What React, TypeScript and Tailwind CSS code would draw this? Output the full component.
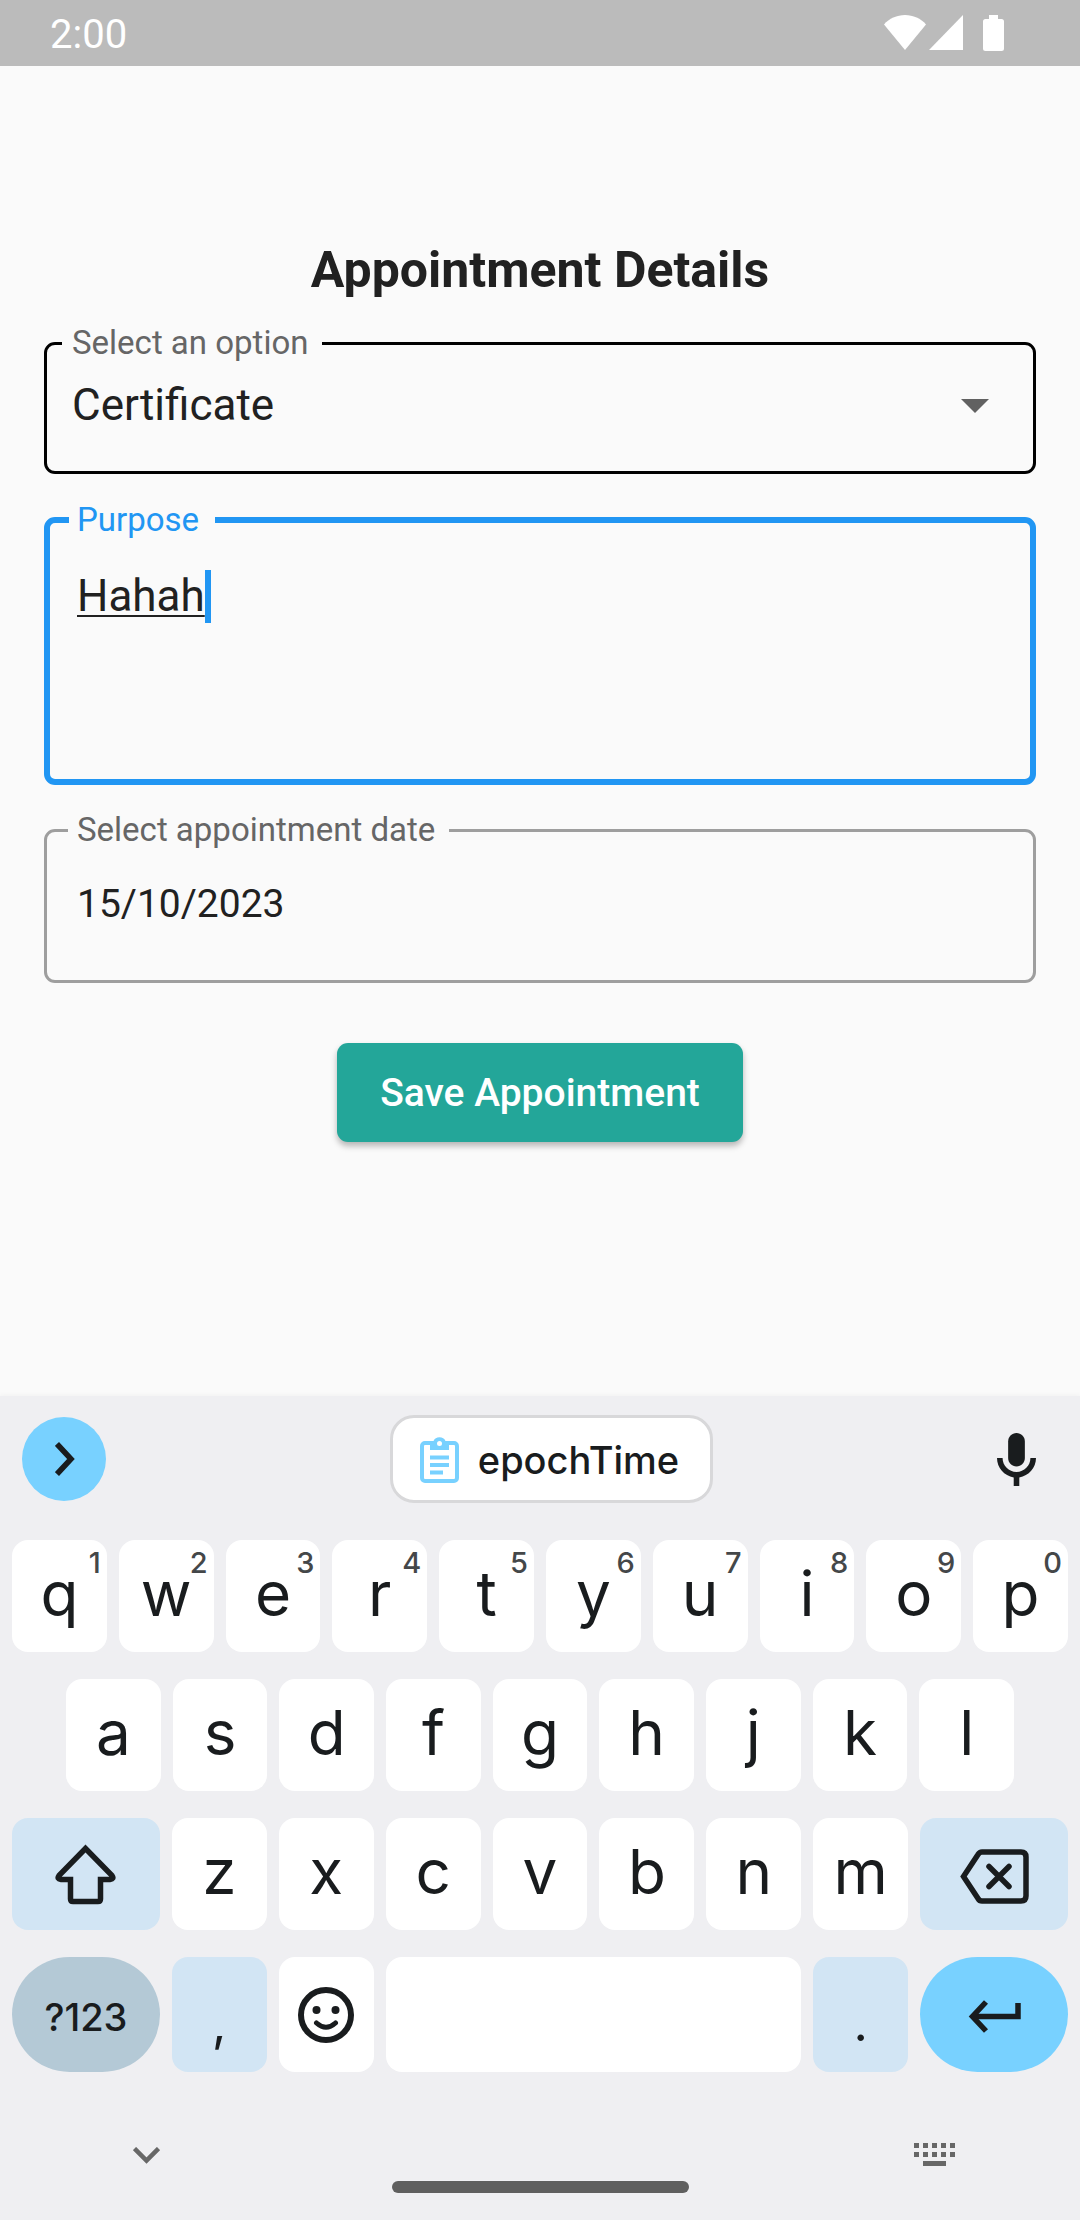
import type { ReactNode } from "react";

function StatusBar() {
  return (
    <header className="flex h-[66px] items-center justify-between bg-[#bbbbbb] pl-[50px] pr-[76px] text-white">
      <span className="pt-1 text-[40px] leading-[48px]">2:00</span>
      <div className="flex items-center">
        <svg className="h-[36px] w-[42px]" viewBox="0 0 42 36" fill="currentColor" aria-label="Wi-Fi">
          <path d="M21 35L0 9.500C5 3.500 13 0 21 0s16 3.500 21 9.500z" />
        </svg>
        <svg className="ml-[3px] h-[36px] w-[34px]" viewBox="0 0 34 36" fill="currentColor" aria-label="Signal">
          <path d="M34 0V35H0z" />
        </svg>
        <svg className="ml-5 h-[36px] w-[21px]" viewBox="0 0 21 36" fill="currentColor" aria-label="Battery">
          <path d="M6 0h9v4h3.500Q21 4 21 6.500V33.500Q21 36 18.500 36H2.500Q0 36 0 33.500V6.500Q0 4 2.500 4H6z" />
        </svg>
      </div>
    </header>
  );
}

const legendBase = "text-[33px] leading-[38px]";

function AppointmentForm() {
  return (
    <main className="flex flex-1 flex-col items-stretch px-11 pt-[174px] text-[#212121]">
      <h1 className="text-center text-[50px] font-bold leading-[60px]">Appointment Details</h1>

      <fieldset className="relative mt-6 rounded-[11px] border-3 border-black">
        <legend className="ml-[15px] pl-[10px] pr-[14px] text-[#666666]">
          <label htmlFor="option" className={`${legendBase} block`}>
            Select an option
          </label>
        </legend>
        <select
          id="option"
          defaultValue="Certificate"
          className="block h-[109px] w-full appearance-none bg-transparent pb-[23px] pl-[25px] text-[44px] leading-[52px] outline-none"
        >
          <option>Certificate</option>
        </select>
        <svg className="pointer-events-none absolute right-11 top-[37px] h-[14px] w-[28px]" viewBox="0 0 28 14" fill="#616161" aria-hidden="true">
          <path d="M0 0h28L14 14z" />
        </svg>
      </fieldset>

      <fieldset className="relative mt-[27px] rounded-[11px] border-6 border-[#2196f3]">
        <legend className="ml-[19px] pl-2 pr-4 text-[#2196f3]">
          <label htmlFor="purpose" className={`${legendBase} block`}>
            Purpose
          </label>
        </legend>
        <textarea
          id="purpose"
          defaultValue="Hahah"
          spellCheck={false}
          className="block h-[240px] w-full resize-none bg-transparent pl-[27px] pt-[31px] text-[44px] leading-[52px] underline decoration-2 underline-offset-4 outline-none"
        />
        <span className="absolute left-[155px] top-[31px] h-[53px] w-1.5 bg-[#2196f3]" aria-hidden="true" />
      </fieldset>

      <fieldset className="mt-[26px] rounded-[11px] border-3 border-[#9e9e9e]">
        <legend className="ml-[21px] pl-[9px] pr-[14px] text-[#666666]">
          <label htmlFor="date" className={`${legendBase} block`}>
            Select appointment date
          </label>
        </legend>
        <input
          id="date"
          type="text"
          defaultValue="15/10/2023"
          className="block h-[131px] w-full bg-transparent pb-[21px] pl-[30px] text-[39px] leading-[48px] outline-none"
        />
      </fieldset>

      <button
        type="button"
        className="mt-[60px] h-[99px] self-center rounded-[11px] bg-[#23a699] px-[43px] text-[39px] font-medium leading-[48px] text-white shadow-[0_4px_6px_rgba(0,0,0,0.28)]"
      >
        Save Appointment
      </button>
    </main>
  );
}

type KeyProps = {
  label: string;
  hint?: string;
  className?: string;
  children?: ReactNode;
};

function Key({ label, hint, className, children }: KeyProps) {
  return (
    <button
      type="button"
      aria-label={label}
      className={`relative flex h-full min-w-0 items-center justify-center ${
        className ?? "flex-[95_1_0px] rounded-2xl bg-white pb-1 text-[62px] leading-[76px]"
      }`}
    >
      {children ?? label}
      {hint && (
        <span className="absolute right-1.5 top-2 text-[29px] font-medium leading-[29px] text-[#444749]">{hint}</span>
      )}
    </button>
  );
}

const topRow = [
  ["q", "1"],
  ["w", "2"],
  ["e", "3"],
  ["r", "4"],
  ["t", "5"],
  ["y", "6"],
  ["u", "7"],
  ["i", "8"],
  ["o", "9"],
  ["p", "0"],
];
const homeRow = ["a", "s", "d", "f", "g", "h", "j", "k", "l"];
const bottomRow = ["z", "x", "c", "v", "b", "n", "m"];

function SuggestionBar() {
  return (
    <div className="flex h-[88px] items-center justify-between pl-[22px] pr-11">
      <button type="button" aria-label="Expand toolbar" className="flex size-[84px] items-center justify-center rounded-full bg-[#78d1ff]">
        <svg className="ml-0.5 h-[34px] w-[20px]" viewBox="0 0 20 34" fill="none" stroke="currentColor" strokeWidth="5.500" aria-hidden="true">
          <path d="M2 2L16 17L2 32" />
        </svg>
      </button>
      <button type="button" className="flex h-full items-center rounded-[24px] border-3 border-[#d8d8da] bg-white pl-[27px] pr-[31px] text-[38px] font-medium leading-[48px]">
        <svg className="mr-[19px] h-[47px] w-[39px]" viewBox="0 0 39 47" fill="none" aria-hidden="true">
          <rect x="2" y="7" width="35" height="38" rx="3" stroke="#78d1ff" strokeWidth="4" />
          <path d="M10 5h3.500a6.500 6 0 0 1 12 0H29v9H10z" fill="#78d1ff" />
          <circle cx="19.500" cy="7.500" r="2.500" fill="#fff" />
          <path d="M10 21.500h19M10 29h19M10 36.500h13" stroke="#78d1ff" strokeWidth="4" />
        </svg>
        <span className="pt-0.5">epochTime</span>
      </button>
      <button type="button" aria-label="Voice input">
        <svg className="h-[53px] w-[39px]" viewBox="5 2 14 19" fill="currentColor" aria-hidden="true">
          <path d="M12 14c1.660 0 3-1.340 3-3V5c0-1.660-1.340-3-3-3S9 3.340 9 5v6c0 1.660 1.340 3 3 3z" />
          <path d="M17 11c0 2.760-2.240 5-5 5s-5-2.240-5-5H5c0 3.530 2.610 6.430 6 6.920V21h2v-3.080c3.390-.49 6-3.390 6-6.920h-2z" />
        </svg>
      </button>
    </div>
  );
}

function Keyboard() {
  return (
    <section
      aria-label="Keyboard"
      className="bg-[#efeff2] pb-[27px] pt-[19px] font-[Inter,sans-serif] text-[#191c1e] shadow-[0_-1px_5px_rgba(0,0,0,0.04)]"
    >
      <SuggestionBar />

      <div className="mt-[37px] flex flex-col gap-[27px] px-3">
        <div className="flex h-28 gap-3">
          {topRow.map(([letter, digit]) => (
            <Key key={letter} label={letter} hint={digit} />
          ))}
        </div>
        <div className="flex h-28 gap-3 px-[54px]">
          {homeRow.map((letter) => (
            <Key key={letter} label={letter} />
          ))}
        </div>
        <div className="flex h-28 gap-3">
          <Key label="Shift" className="flex-[148_1_0px] rounded-2xl bg-[#d2e5f4]">
            <svg className="h-[61px] w-[61px]" viewBox="0 0 61 61" fill="none" stroke="currentColor" strokeWidth="5.500" aria-hidden="true">
              <path d="M30.500 4.500L4 31.500Q1.500 35 6 35.500H15.500V55Q15.500 57.500 18 57.500H43Q45.500 57.500 45.500 55V35.500H55Q59.500 35 57 31.500Z" />
            </svg>
          </Key>
          {bottomRow.map((letter) => (
            <Key key={letter} label={letter} />
          ))}
          <Key label="Backspace" className="flex-[148_1_0px] rounded-2xl bg-[#d2e5f4]">
            <svg className="mt-1 h-[55px] w-[69px]" viewBox="0 0 69 55" fill="none" stroke="currentColor" strokeWidth="5.500" aria-hidden="true">
              <path d="M3.500 27.500L18 5.500Q19.500 3 22 3H61Q66 3 66 8V47Q66 52 61 52H22Q19.500 52 18 49.500Z" />
              <path d="M29 17.500L49 37.500M49 17.500L29 37.500" strokeLinecap="round" />
            </svg>
          </Key>
        </div>
        <div className="flex h-[115px] gap-3">
          <Key label="?123" className="flex-[148_1_0px] rounded-full bg-[#b4c9d6] pt-1 text-[38px] font-medium leading-[48px]" />
          <Key label="," className="flex-[95_1_0px] rounded-2xl bg-[#d2e5f4] pt-4 text-[50px] leading-[60px]" />
          <Key label="Emoji" className="flex-[95_1_0px] rounded-2xl bg-white">
            <svg className="size-[56px]" viewBox="0 0 56 56" fill="none" stroke="currentColor" strokeWidth="6" aria-hidden="true">
              <circle cx="28" cy="28" r="25" />
              <circle cx="18.500" cy="23" r="4" fill="currentColor" stroke="none" />
              <circle cx="37.500" cy="23" r="4" fill="currentColor" stroke="none" />
              <path d="M18.500 36Q28 44.500 37.500 36" strokeWidth="5" strokeLinecap="round" />
            </svg>
          </Key>
          <Key label="Space" className="flex-[416_1_0px] rounded-2xl bg-white">
            <span />
          </Key>
          <Key label="." className="flex-[95_1_0px] rounded-2xl bg-[#d2e5f4] pt-4 text-[50px] leading-[60px]" />
          <Key label="Enter" className="flex-[148_1_0px] rounded-full bg-[#78d1ff]">
            <svg className="mt-1 h-[33px] w-[53px]" viewBox="0 0 53 33" fill="none" stroke="currentColor" strokeWidth="5.500" aria-hidden="true">
              <path d="M50 3V16.500H5" />
              <path d="M18 2L4.500 16.500L18 31" />
            </svg>
          </Key>
        </div>
      </div>

      <div className="mt-[71px] flex h-6 items-center justify-between pl-[133px] pr-[124px] text-[#676767]">
        <button type="button" aria-label="Hide keyboard">
          <svg className="h-[17px] w-[27px]" viewBox="0 0 27 17" fill="none" stroke="currentColor" strokeWidth="4.500" aria-hidden="true">
            <path d="M1.500 1.500L13.500 13.500L25.500 1.500" />
          </svg>
        </button>
        <button type="button" aria-label="Switch keyboard">
          <svg className="h-[24px] w-[42px]" viewBox="0 0 42 24" fill="currentColor" aria-hidden="true">
            {[0, 9, 18, 27, 36].map((x) => (
              <g key={x}>
                <rect x={x} y="0" width="5" height="5" />
                <rect x={x} y="9" width="5" height="5" />
              </g>
            ))}
            <rect x="9" y="18" width="23" height="5" />
          </svg>
        </button>
      </div>
      <div className="mx-auto mt-[14px] h-3 w-[297px] rounded-full bg-[#5f5f5f]" />
    </section>
  );
}

export default function App() {
  return (
    <div className="flex min-h-screen flex-col bg-[#fafafa] font-[Roboto,sans-serif]">
      <StatusBar />
      <AppointmentForm />
      <Keyboard />
    </div>
  );
}
